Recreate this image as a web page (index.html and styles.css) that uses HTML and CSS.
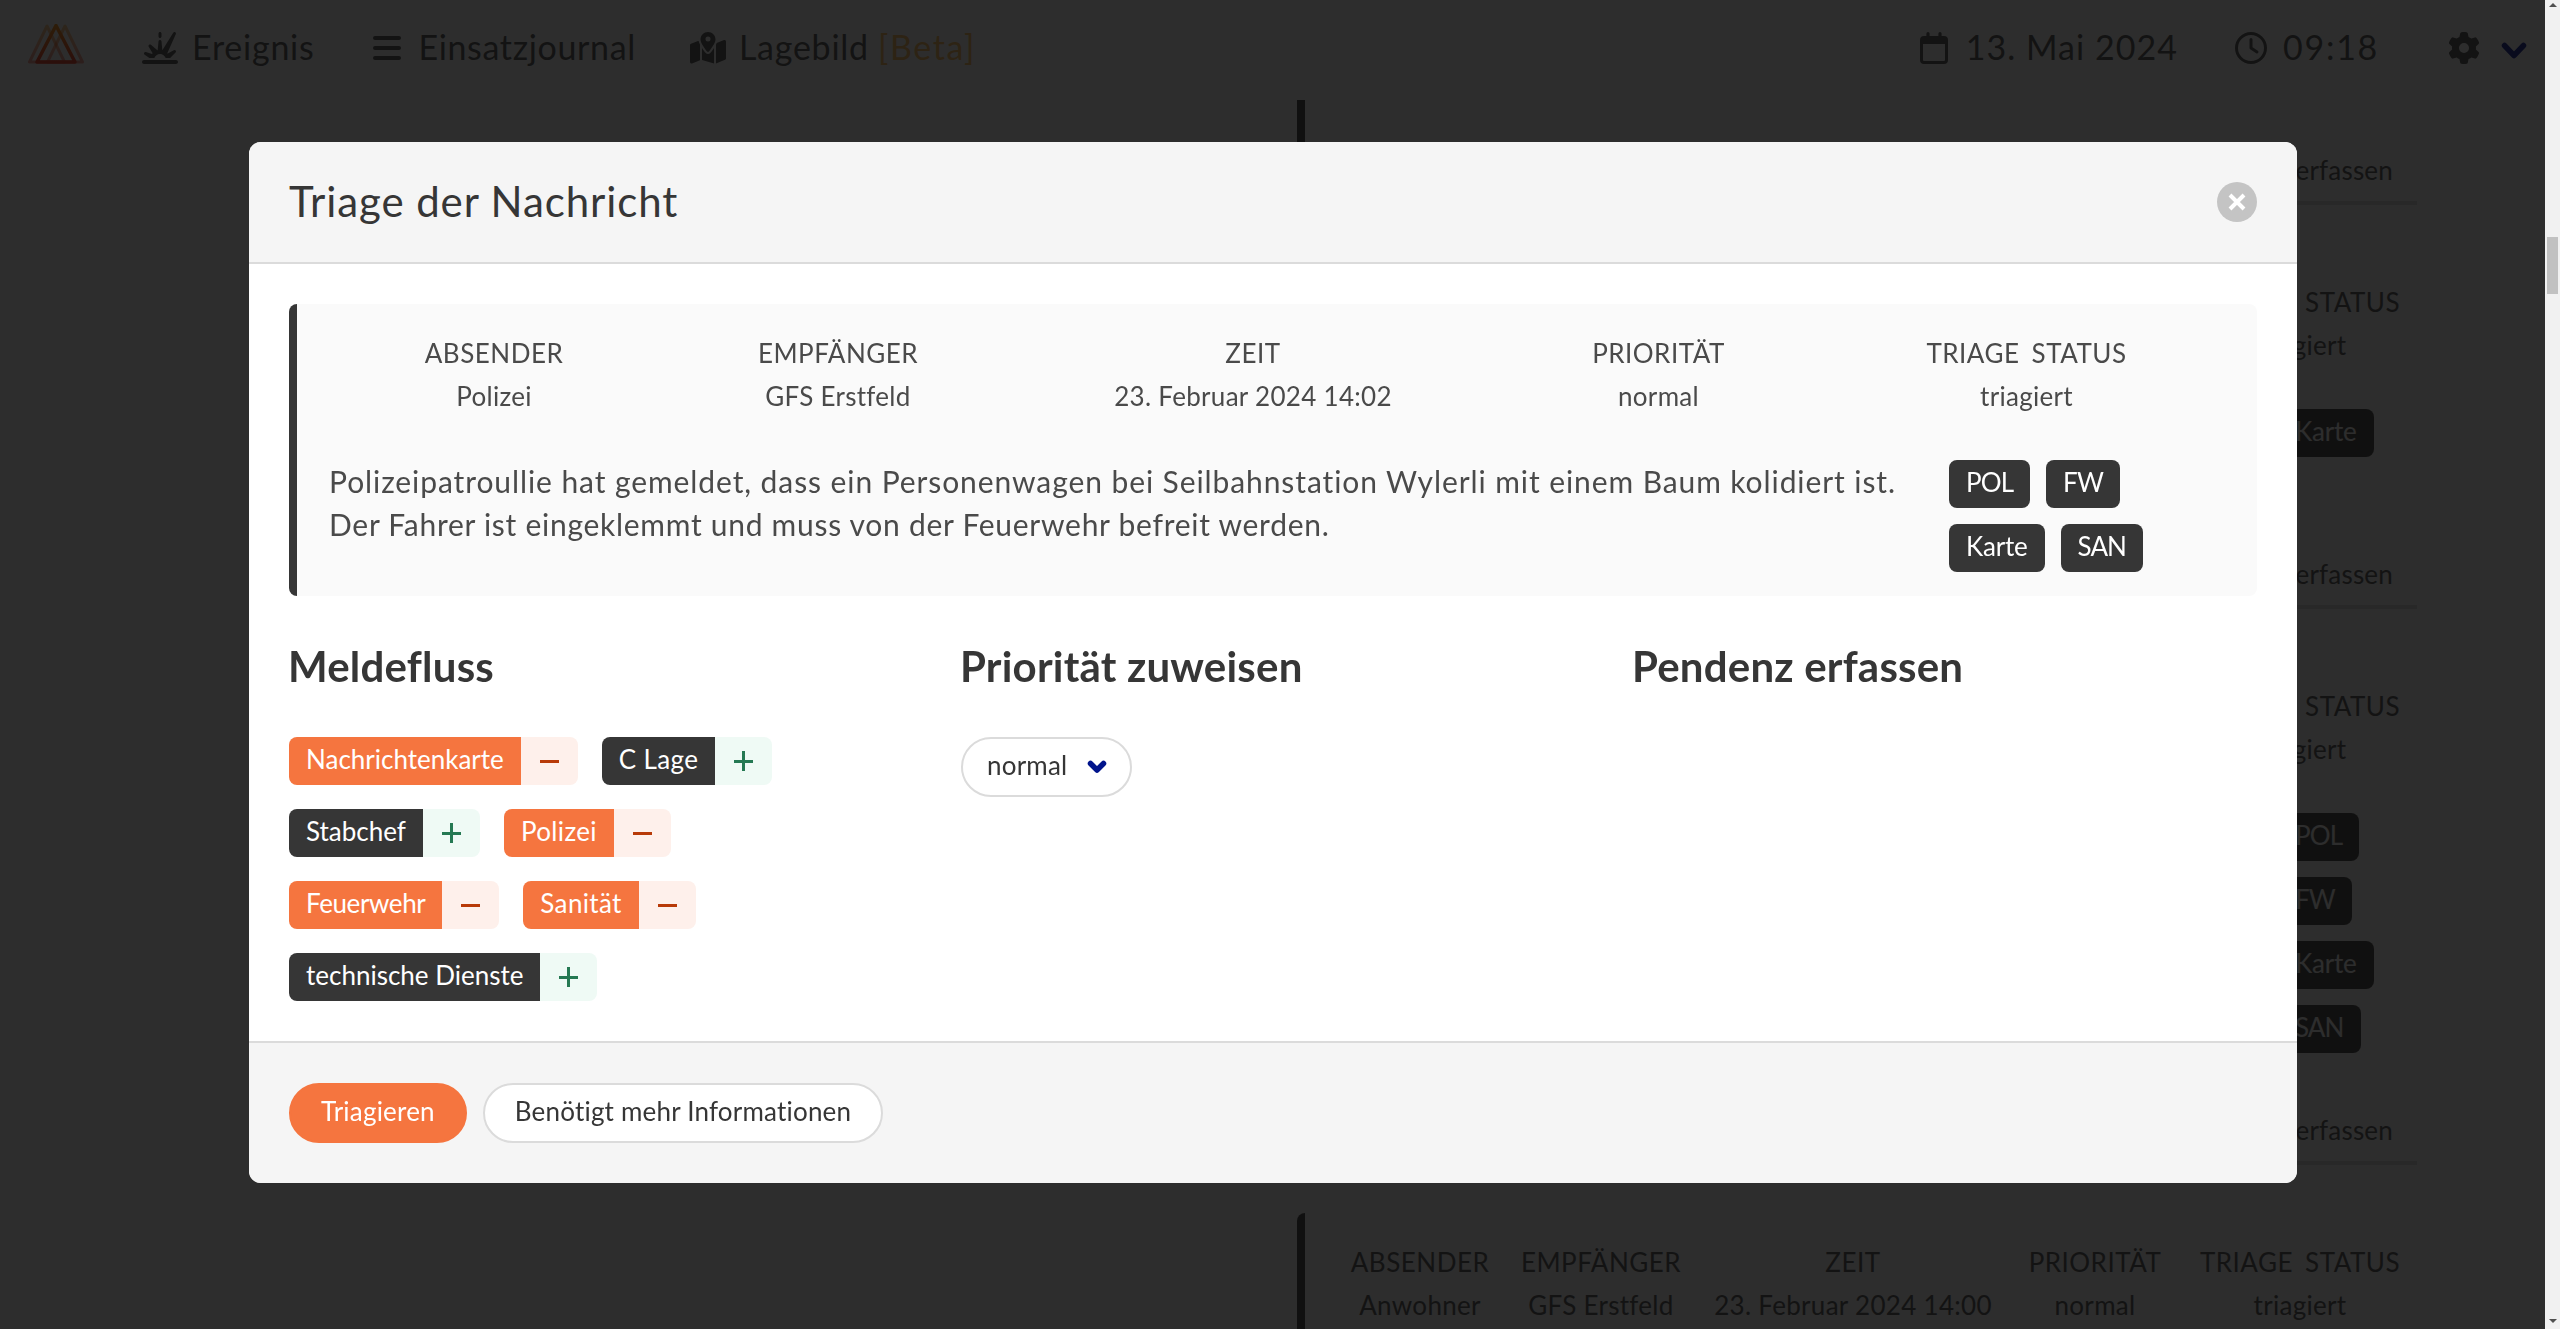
FILE: index.html
```html
<!DOCTYPE html>
<html lang="de">
<head>
<meta charset="utf-8">
<title>Einsatzjournal</title>
<link rel="stylesheet" href="styles.css">
</head>
<body>
<div class="app">
  <nav class="navbar">
    <svg class="logo" viewBox="0 0 56 40" fill="none" stroke-linejoin="round">
      <defs><linearGradient id="flame" x1="0" y1="0" x2="0" y2="1"><stop offset="0" stop-color="#ff8a00"/><stop offset="1" stop-color="#f02a10"/></linearGradient></defs>
      <g stroke="url(#flame)" stroke-width="3">
        <path opacity=".5" d="M19 2 1.500 38h35z"/><path opacity=".5" d="M37 2 19.500 38h35z"/>
        <path stroke-width="3.500" d="M28 1.500 9 38h38z"/>
      </g>
    </svg>
    <a class="nav-item event">
      <svg width="36" height="32" viewBox="0 0 576 512" fill="currentColor"><path d="M499.6 11.3c6.7-10.7 20.5-14.5 31.7-8.5s15.8 19.5 10.6 31L404.8 338.6c2.2 2.3 4.3 4.7 6.3 7.1l97.2-54.7c10.5-5.9 23.6-3.1 30.9 6.4s6.3 23-2.2 31.5l-87 87-71.4 0c-13.2-37.3-48.7-64-90.5-64s-77.4 26.7-90.5 64l-79.6 0L42.3 363.7c-9.7-6.7-13.1-19.6-7.9-30.3s17.4-15.9 28.7-12.4l97.2 30.4c3-3.9 6.1-7.7 9.4-11.3L107.4 236.3c-6.1-10.1-3.9-23.1 5.1-30.7s22.2-7.5 31.1 .1L246 293.6c1.5-.4 3-.8 4.5-1.1l13.6-142.7c1.2-12.3 11.5-21.7 23.9-21.7s22.7 9.4 23.9 21.7l13.5 141.9L499.6 11.3zM64 448l0 0 448 0 0 0 32 0c17.7 0 32 14.3 32 32s-14.3 32-32 32L32 512c-17.7 0-32-14.3-32-32s14.3-32 32-32l32 0zM288 0c13.3 0 24 10.7 24 24l0 48c0 13.3-10.7 24-24 24s-24-10.7-24-24l0-48c0-13.3 10.7-24 24-24z"/></svg>
      <span>Ereignis</span>
    </a>
    <a class="nav-item journal">
      <svg width="28" height="32" viewBox="0 0 28 32" stroke="currentColor" stroke-width="4" stroke-linecap="round"><path d="M2 6h24M2 16h24M2 26h24"/></svg>
      <span>Einsatzjournal</span>
    </a>
    <a class="nav-item map">
      <svg width="36" height="32" viewBox="0 0 576 512" fill="currentColor"><path d="M408 120c0 54.6-73.1 151.9-105.2 192c-7.7 9.6-22 9.6-29.6 0C241.1 271.9 168 174.6 168 120C168 53.7 221.7 0 288 0s120 53.7 120 120zm8 80.4c3.5-6.9 6.7-13.8 9.6-20.6c.5-1.2 1-2.5 1.5-3.7l116-46.4C558.9 123.4 576 135 576 152V422.8c0 9.8-6 18.6-15.1 22.3L416 503V200.4zM137.6 138.3c2.4 14.1 7.2 28.3 12.8 41.5c2.9 6.8 6.1 13.7 9.6 20.6V451.8L32.9 502.7C17.1 509 0 497.4 0 480.4V209.6c0-9.8 6-18.6 15.1-22.3l122.6-49zM327.8 332c13.9-17.4 35.7-45.7 56.2-77V504.3L192 449.4V255c20.5 31.3 42.3 59.6 56.2 77c20.5 25.6 59.1 25.6 79.6 0zM288 152a40 40 0 1 0 0-80 40 40 0 1 0 0 80z"/></svg>
      <span>Lagebild</span> <span class="beta">[Beta]</span>
    </a>
    <div class="nav-item date">
      <svg width="28" height="32" viewBox="0 0 28 32"><path fill="currentColor" fill-rule="evenodd" d="M8 0a1.6 1.6 0 0 1 1.6 1.6V4h8.8V1.6a1.6 1.6 0 0 1 3.2 0V4H24a4 4 0 0 1 4 4v20a4 4 0 0 1-4 4H4a4 4 0 0 1-4-4V8a4 4 0 0 1 4-4h2.4V1.6A1.6 1.6 0 0 1 8 0zM3 12v16a1 1 0 0 0 1 1h20a1 1 0 0 0 1-1V12z"/></svg>
      <span>13. Mai 2024</span>
    </div>
    <div class="nav-item time">
      <svg width="32" height="32" viewBox="0 0 32 32" fill="none" stroke="currentColor" stroke-width="3" stroke-linecap="round" stroke-linejoin="round"><circle cx="16" cy="16" r="14.5"/><path d="M16 7.5V16l6 4"/></svg>
      <span>09:18</span>
    </div>
    <div class="nav-item settings">
      <svg width="32" height="32" viewBox="0 0 512 512" fill="currentColor"><path d="M495.9 166.6c3.2 8.7 .5 18.4-6.4 24.6l-43.3 39.4c1.1 8.3 1.7 16.8 1.7 25.4s-.6 17.1-1.7 25.4l43.3 39.4c6.9 6.2 9.6 15.9 6.4 24.6c-4.4 11.9-9.7 23.3-15.8 34.3l-4.7 8.1c-6.6 11-14 21.4-22.1 31.2c-5.9 7.2-15.7 9.6-24.5 6.8l-55.7-17.7c-13.4 10.3-28.2 18.9-44 25.4l-12.5 57.1c-2 9.1-9 16.3-18.2 17.8c-13.8 2.3-28 3.5-42.5 3.5s-28.7-1.2-42.5-3.5c-9.2-1.5-16.2-8.7-18.2-17.8l-12.5-57.1c-15.8-6.5-30.6-15.1-44-25.4L83.1 425.9c-8.8 2.8-18.6 .3-24.5-6.8c-8.1-9.8-15.5-20.2-22.1-31.2l-4.7-8.1c-6.1-11-11.4-22.4-15.8-34.3c-3.2-8.7-.5-18.4 6.4-24.6l43.3-39.4C64.6 273.1 64 264.6 64 256s.6-17.1 1.7-25.4L22.4 191.2c-6.9-6.2-9.6-15.9-6.4-24.6c4.4-11.9 9.7-23.3 15.8-34.3l4.7-8.1c6.6-11 14-21.4 22.1-31.2c5.9-7.2 15.7-9.6 24.5-6.8l55.7 17.7c13.4-10.3 28.2-18.9 44-25.4l12.5-57.1c2-9.1 9-16.3 18.2-17.8C227.3 1.2 241.5 0 256 0s28.7 1.2 42.5 3.5c9.2 1.5 16.2 8.7 18.2 17.8l12.5 57.1c15.8 6.5 30.6 15.1 44 25.4l55.7-17.7c8.8-2.8 18.6-.3 24.5 6.8c8.1 9.8 15.5 20.2 22.1 31.2l4.7 8.1c6.1 11 11.4 22.4 15.8 34.3zM256 336a80 80 0 1 0 0-160 80 80 0 1 0 0 160z"/></svg>
      <svg class="chevron" width="26" height="18" viewBox="0 0 26 18"><path d="m3.5 3.5 9.5 10 9.5-10"/></svg>
    </div>
  </nav>

  <main class="feed">
    <article class="card clipped"><div class="card-foot">Pendenz erfassen</div></article>
    <article class="card single">
      <div class="meta">
        <div><b>Absender</b><span>Polizei</span></div><div><b>Empfänger</b><span>GFS Erstfeld</span></div><div><b>Zeit</b><span>23. Februar 2024 14:03</span></div><div><b>Priorität</b><span>normal</span></div><div><b>Triage Status</b><span>triagiert</span></div>
      </div>
      <div class="content"><p></p><div class="tags"><span class="tag">Karte</span></div></div>
      <div class="card-foot">Pendenz erfassen</div>
    </article>
    <article class="card multi">
      <div class="meta">
        <div><b>Absender</b><span>Polizei</span></div><div><b>Empfänger</b><span>GFS Erstfeld</span></div><div><b>Zeit</b><span>23. Februar 2024 14:02</span></div><div><b>Priorität</b><span>normal</span></div><div><b>Triage Status</b><span>triagiert</span></div>
      </div>
      <div class="content"><p></p><div class="tags"><span class="tag abbr">POL</span><span class="tag abbr">FW</span><span class="tag">Karte</span><span class="tag abbr">SAN</span></div></div>
      <div class="card-foot">Pendenz erfassen</div>
    </article>
    <article class="card last">
      <div class="meta">
        <div><b>Absender</b><span>Anwohner</span></div><div><b>Empfänger</b><span>GFS Erstfeld</span></div><div><b>Zeit</b><span>23. Februar 2024 14:00</span></div><div><b>Priorität</b><span>normal</span></div><div><b>Triage Status</b><span>triagiert</span></div>
      </div>
    </article>
  </main>
</div>

<div class="overlay">
  <section class="modal">
    <header class="modal-head">
      <h1>Triage der Nachricht</h1>
      <svg class="close" width="40" height="40" viewBox="0 0 40 40"><circle cx="20" cy="20" r="20"/><path d="m13 13 14 14M27 13 13 27"/></svg>
    </header>
    <div class="modal-body">
      <article class="card message">
        <div class="meta">
          <div><b>Absender</b><span>Polizei</span></div><div><b>Empfänger</b><span>GFS Erstfeld</span></div><div><b>Zeit</b><span>23. Februar 2024 14:02</span></div><div><b>Priorität</b><span>normal</span></div><div><b>Triage Status</b><span>triagiert</span></div>
        </div>
        <div class="content">
          <p>Polizeipatroullie hat gemeldet, dass ein Personenwagen bei Seilbahnstation Wylerli mit einem Baum kolidiert ist.<br><span class="tight">Der Fahrer ist eingeklemmt und muss von der Feuerwehr befreit werden.</span></p>
          <div class="tags"><span class="tag abbr">POL</span><span class="tag abbr">FW</span><span class="tag">Karte</span><span class="tag abbr">SAN</span></div>
        </div>
      </article>
      <div class="columns">
        <div>
          <h2>Meldefluss</h2>
          <div class="chips">
            <div class="chip on"><span>Nachrichtenkarte</span><i></i></div>
            <div class="chip wide"><span>C Lage</span><i></i></div>
            <div class="chip"><span>Stabchef</span><i></i></div>
            <div class="chip on wide"><span>Polizei</span><i></i></div>
            <div class="chip on tight"><span>Feuerwehr</span><i></i></div>
            <div class="chip on wide"><span>Sanität</span><i></i></div>
            <div class="chip"><span>technische Dienste</span><i></i></div>
          </div>
        </div>
        <div>
          <h2>Priorität zuweisen</h2>
          <div class="select"><span>normal</span><svg class="chevron" width="20" height="14" viewBox="0 0 20 14"><path d="m3.5 3.5 6.500 6.500 6.500-6.500"/></svg></div>
        </div>
        <div><h2>Pendenz erfassen</h2></div>
      </div>
    </div>
    <footer class="modal-foot">
      <button class="btn primary">Triagieren</button>
      <button class="btn">Benötigt mehr Informationen</button>
    </footer>
  </section>
</div>
<div class="scrollbar"><i class="up"></i><i class="thumb"></i><i class="down"></i></div>
</body>
</html>
```
FILE: styles.css
```css
* { box-sizing: border-box; }
html, body { height: 100%; overflow: hidden; }
body { margin: 0; background: #fff; color: #4a4a4a; font-family: Lato, "Noto Sans", sans-serif; font-size: 26px; line-height: 43px; }
svg { display: block; flex: none; }
h1, h2, p { margin: 0; }

/* Navigation */
.navbar { height: 100px; padding: 0 33px 4px 28px; display: flex; align-items: center; color: #4a4a4a; font-size: 34px; letter-spacing: .75px; white-space: nowrap; }
.logo { width: 56px; height: 40px; margin-top: -8px; }
.nav-item { display: flex; align-items: center; height: 60px; }
.nav-item span { padding-bottom: 3px; }
.event { margin-left: 58px; gap: 14px; }
.journal { margin-left: 59px; gap: 17px; letter-spacing: .65px; }
.map { margin-left: 54px; gap: 13px; }
.nav-item .beta { color: #ffb84d; letter-spacing: 1.6px; margin-left: -4px; }
.date { margin-left: auto; gap: 18px; letter-spacing: 1.05px; }
.time { margin-left: 57px; gap: 16px; letter-spacing: 1.7px; }
.settings { margin-left: 69px; gap: 21px; }
.chevron { fill: none; stroke: #00148c; stroke-width: 5.5; stroke-linecap: round; stroke-linejoin: round; }
.settings .chevron { margin-top: 5px; }

/* Messages */
.app { height: 1329px; overflow: hidden; }
.feed { width: 1152px; margin-left: 1297px; display: flex; flex-direction: column; gap: 48px; }
.card { background: #fafafa; border-left: 8px solid #363636; border-radius: 8px; padding: 28px 32px 22px; display: flex; flex-direction: column; }
.feed .card { padding-bottom: 0; }
.clipped { height: 105px; border-top-left-radius: 0; border-top-right-radius: 0; }
.single { height: 356px; }
.multi { height: 508px; }
.feed .last { height: 116px; border-bottom-left-radius: 0; border-bottom-right-radius: 0; }
.meta { display: grid; grid-template-columns: 166px 196px 308px 176px 1fr; text-align: center; white-space: nowrap; }
.meta div { display: flex; flex-direction: column; letter-spacing: .3px; }
.meta b { font-weight: 400; text-transform: uppercase; letter-spacing: .5px; word-spacing: 5px; }
.content { display: grid; grid-template-columns: 1fr 139px; padding-top: 42px; }
.content p { font-size: 30px; letter-spacing: .91px; white-space: nowrap; }
.content .tight { letter-spacing: .72px; }
.tags { display: flex; flex-wrap: wrap; gap: 16px; align-content: flex-start; }
.tag { height: 48px; padding: 1px 17px 4px; border-radius: 8px; background: #363636; color: #fff; line-height: 43px; letter-spacing: -.2px; }
.abbr { letter-spacing: -.9px; }
.card-foot { margin-top: auto; border-bottom: 4px solid #dbdbdb; text-align: right; padding: 0 24px 9px; letter-spacing: .2px; }

/* Dialog */
.overlay { position: fixed; inset: 0; background: rgba(10, 10, 10, .86); padding: 142px 263px 0 249px; }
.modal { height: 1041px; border-radius: 12px; overflow: hidden; background: #fff; display: flex; flex-direction: column; }
.modal-head { height: 122px; padding: 0 40px; background: #f5f5f5; border-bottom: 2px solid #dbdbdb; display: flex; align-items: center; justify-content: space-between; }
h1 { font-size: 42px; font-weight: 400; color: #363636; letter-spacing: .9px; padding-bottom: 2px; }
.close circle { fill: #c4c4c4; }
.close path { stroke: #fff; stroke-width: 4; }
.modal-body { flex: 1; padding: 40px; }
.message { height: 292px; }
.message .meta { grid-template-columns: 330px 358px 472px 339px 1fr; }
.message .content { grid-template-columns: 1fr 276px; }
.columns { display: grid; grid-template-columns: repeat(3, 1fr); gap: 48px; padding-top: 43px; }
h2 { font-size: 42px; line-height: 54px; color: #363636; letter-spacing: .2px; margin: 0 0 44px -1px; }
.chips { width: 600px; display: flex; flex-wrap: wrap; gap: 24px; }
.chip { height: 48px; display: flex; border-radius: 8px; overflow: hidden; color: #fff; line-height: 45px; }
.chip span { background: #363636; padding: 0 17px; }
.chip.wide { letter-spacing: .35px; }
.chip.tight { letter-spacing: -.4px; }
.chip i { width: 57px; color: #257953; background: linear-gradient(currentColor, currentColor) center / 19px 3px no-repeat, linear-gradient(currentColor, currentColor) center / 3px 20px no-repeat, #effaf5; }
.chip.on span { background: #f5753f; }
.chip.on i { color: #b83a08; background: linear-gradient(currentColor, currentColor) center / 19px 3px no-repeat, #fef0eb; }
.select { width: 171px; height: 60px; border: 2px solid #dbdbdb; border-radius: 30px; padding: 0 23px 0 24px; display: flex; align-items: center; justify-content: space-between; color: #363636; letter-spacing: .2px; }
.select span { padding-bottom: 3px; }
.modal-foot { height: 142px; padding: 0 40px; background: #f5f5f5; border-top: 2px solid #dbdbdb; display: flex; align-items: center; gap: 16px; }
.btn { height: 60px; padding: 0 30px 3px; border: 2px solid #dbdbdb; border-radius: 30px; background: #fff; color: #363636; font: inherit; letter-spacing: .2px; }
.primary { background: #f5753f; border-color: #f5753f; color: #fff; }

/* Page scrollbar */
.scrollbar { position: fixed; top: 0; right: 0; bottom: 0; width: 15px; background: #f1f1f1; display: flex; flex-direction: column; align-items: center; padding: 3px 0 6px; }
.scrollbar .thumb { width: 11px; height: 57px; background: #c1c1c1; margin: 230px 0 auto; }
.up, .down { border: 4px solid transparent; }
.up { border-top: 0; border-bottom-color: #505050; }
.down { border-bottom: 0; border-top-color: #505050; }
```
